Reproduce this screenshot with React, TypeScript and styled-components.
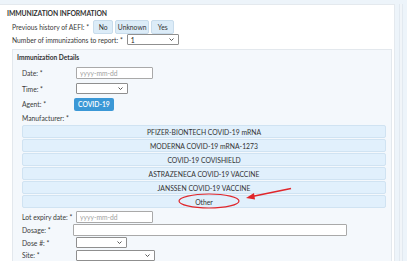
import React from "react";
import styled, { createGlobalStyle } from "styled-components";

const GlobalStyle = createGlobalStyle`
  html, body {
    margin: 0;
    padding: 0;
    background: #edf4fa;
  }
  body {
    font-family: Lato, "Open Sans", "Liberation Sans", sans-serif;
    color: #333;
  }
  * {
    box-sizing: border-box;
  }
`;

const manufacturers = [
  "PFIZER-BIONTECH COVID-19 mRNA",
  "MODERNA COVID-19 mRNA-1273",
  "COVID-19 COVISHIELD",
  "ASTRAZENECA COVID-19 VACCINE",
  "JANSSEN COVID-19 VACCINE",
  "Other",
];

const toggles = [
  { label: "No", width: 20 },
  { label: "Unknown", width: 34 },
  { label: "Yes", width: 23 },
];

const Chevron = () => (
  <svg width="5" height="3" viewBox="0 0 5 3">
    <path d="M0.5 0.5 L2.5 2.5 L4.5 0.5" fill="none" stroke="#444" strokeWidth="0.9" />
  </svg>
);

const Select = ({ width, value }: { width: number; value?: string }) => (
  <SelectBox style={{ width }}>
    <span>{value}</span>
    <Chevron />
  </SelectBox>
);

const App = () => {
  return (
    <Page>
      <GlobalStyle />
      <Main>
        <Title>IMMUNIZATION INFORMATION</Title>
        <InlineRow $h={16}>
          <Label>Previous history of AEFI: *</Label>
          <Toggles>
            {toggles.map((t) => (
              <Toggle key={t.label} $w={t.width}>
                {t.label}
              </Toggle>
            ))}
          </Toggles>
        </InlineRow>
        <InlineRow $h={13}>
          <Label>Number of immunizations to report: *</Label>
          <Select width={52} value="1" />
        </InlineRow>

        <Details>
          <DetailsTitle>Immunization Details</DetailsTitle>
          <Fields>
            <Field $h={16}>
              <Label>Date: *</Label>
              <Input $w={77} placeholder="yyyy-mm-dd" />
            </Field>
            <Field $h={15}>
              <Label>Time: *</Label>
              <Select width={52} />
            </Field>
            <Field $h={16}>
              <Label>Agent: *</Label>
              <AgentButton>COVID-19</AgentButton>
            </Field>
            <Stack>
              <Label>Manufacturer: *</Label>
              <ManufacturerList>
                {manufacturers.map((m) => (
                  <Manufacturer key={m}>{m}</Manufacturer>
                ))}
              </ManufacturerList>
            </Stack>
            <Field $h={13}>
              <Label>Lot expiry date: *</Label>
              <Input $w={77} placeholder="yyyy-mm-dd" />
            </Field>
            <Field $h={13}>
              <Label>Dosage: *</Label>
              <Input $w={274} $shift={-3} />
            </Field>
            <Field $h={13}>
              <Label>Dose #: *</Label>
              <Select width={51} />
            </Field>
            <Field $h={12}>
              <Label>Site: *</Label>
              <Select width={79} />
            </Field>
          </Fields>
        </Details>
      </Main>
      <Side />
      <Annotation width="407" height="261" viewBox="0 0 407 261">
        <ellipse cx="209" cy="201" rx="30" ry="7" fill="none" stroke="#e0262b" strokeWidth="1.2" />
        <line x1="291" y1="188.5" x2="252" y2="196.5" stroke="#e0262b" strokeWidth="1.6" />
        <polygon points="246,198 254,193 255,199.5" fill="#e0262b" />
      </Annotation>
    </Page>
  );
};

const Page = styled.div`
  position: relative;
  width: 407px;
  height: 261px;
  overflow: hidden;
  display: flex;
  padding-top: 4px;
`;

const Main = styled.div`
  width: 395px;
  flex-shrink: 0;
  background: #ffffff;
  border: 1px solid #e4e9ee;
  border-left: none;
  border-bottom: none;
  padding: 4px 3px 0 7px;
  display: flex;
  flex-direction: column;
`;

const Side = styled.div`
  margin-left: 4px;
  width: 4px;
  background: #f1f5f9;
  border-left: 1px solid #e2e9f0;
  border-right: 1px solid #e2e9f0;
`;

const Title = styled.div`
  font-size: 6.8px;
  font-weight: 700;
  letter-spacing: -0.1px;
  color: #333;
  height: 13px;
  line-height: 8px;
`;

const InlineRow = styled.div<{ $h: number }>`
  display: flex;
  align-items: center;
  gap: 4px;
  padding-left: 5px;
  height: ${(p) => p.$h}px;
`;

const Label = styled.span`
  font-size: 6.75px;
  color: #3a3a3a;
  white-space: nowrap;
`;

const Toggles = styled.div`
  display: flex;
  gap: 2px;
`;

const Toggle = styled.div<{ $w: number }>`
  width: ${(p) => p.$w}px;
  height: 14px;
  display: flex;
  align-items: center;
  justify-content: center;
  font-size: 6.75px;
  color: #333;
  background: #dcecf8;
  border: 1px solid #c8dcec;
  border-radius: 2px;
`;

const SelectBox = styled.div`
  position: relative;
  height: 11px;
  background: #fff;
  border: 1px solid #8f8f8f;
  border-radius: 1px;
  display: flex;
  align-items: center;
  justify-content: space-between;
  padding: 0 4px 0 3px;
  font-size: 6.75px;
  color: #222;
`;

const Details = styled.div`
  margin: 4px 0 0 5px;
  width: 380px;
  flex: 1;
  background: #f4f8fc;
  border: 1px solid #e3e8ed;
  border-bottom: none;
  padding: 3px 5px 0 4px;
`;

const DetailsTitle = styled.div`
  font-size: 6.6px;
  font-weight: 700;
  color: #333;
  height: 12px;
  line-height: 8px;
`;

const Fields = styled.div`
  padding-left: 5px;
  display: flex;
  flex-direction: column;
`;

const Field = styled.div<{ $h: number }>`
  display: grid;
  grid-template-columns: 54px auto;
  align-items: center;
  height: ${(p) => p.$h}px;
  justify-items: start;
`;

const Input = styled.input<{ $w: number; $shift?: number }>`
  width: ${(p) => p.$w}px;
  height: 12px;
  margin-left: ${(p) => p.$shift ?? 0}px;
  border: 1px solid #a9a9a9;
  border-radius: 1px;
  background: #fff;
  padding: 0 3px;
  font-family: inherit;
  font-size: 6.75px;
  outline: none;
  &::placeholder {
    color: #a0a0a0;
  }
`;

const AgentButton = styled.div`
  margin-left: -2px;
  height: 13px;
  padding: 0 4px;
  display: flex;
  align-items: center;
  font-size: 6.75px;
  font-weight: 600;
  color: #fff;
  background: #3b98d6;
  border-radius: 2px;
`;

const Stack = styled.div`
  display: flex;
  flex-direction: column;
  gap: 3px;
  padding-top: 2px;
`;

const ManufacturerList = styled.div`
  display: flex;
  flex-direction: column;
  gap: 1px;
  padding-bottom: 2px;
`;

const Manufacturer = styled.div`
  height: 13px;
  display: flex;
  align-items: center;
  justify-content: center;
  font-size: 6.8px;
  color: #333;
  background: #e1f0fc;
  border: 1px solid #d0e3f2;
  border-radius: 2px;
`;

const Annotation = styled.svg`
  position: absolute;
  left: 0;
  top: 0;
  pointer-events: none;
`;

export default App;
